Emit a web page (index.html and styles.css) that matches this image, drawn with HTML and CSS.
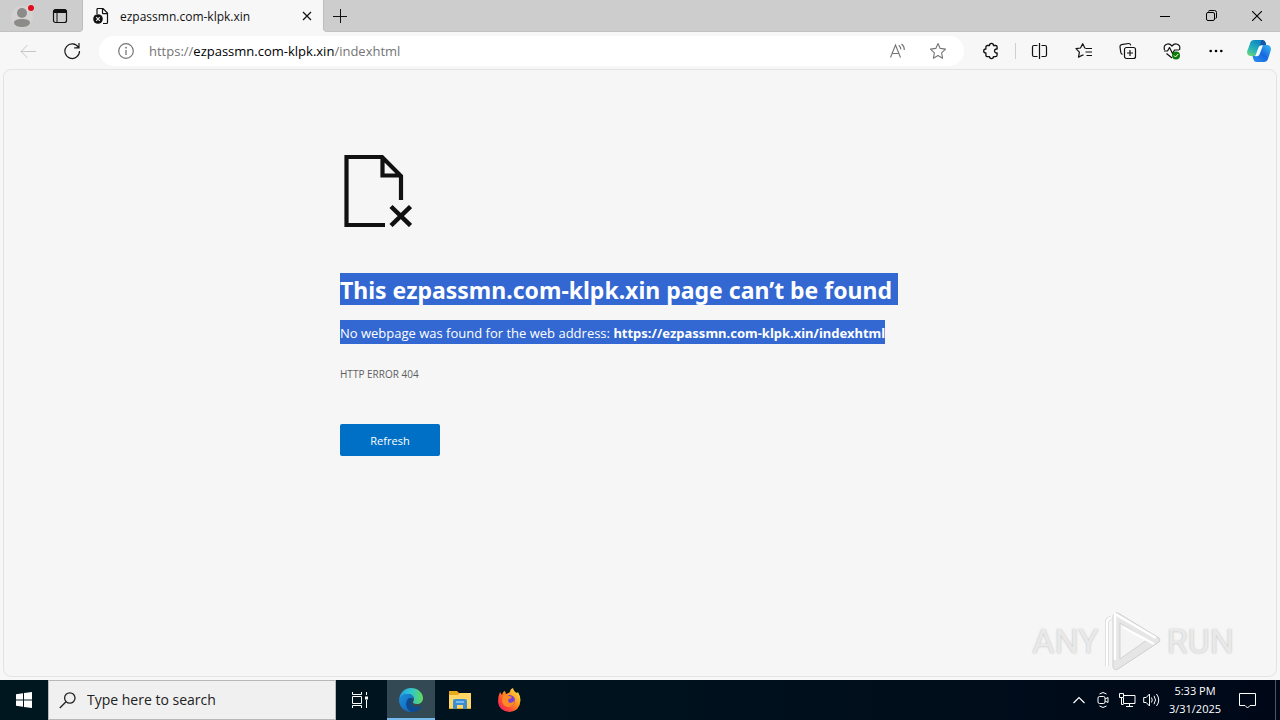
FILE: index.html
```html
<!DOCTYPE html>
<html lang="en">
<head>
<meta charset="utf-8">
<title>ezpassmn.com-klpk.xin</title>
<link rel="stylesheet" href="styles.css">
</head>
<body>
<div class="desktop">
  <header class="titlebar">
    <div class="profile-area">
      <button class="icon-btn profile" aria-label="Profile">
        <svg width="24" height="26" viewBox="0 0 24 26"><circle cx="12" cy="14" r="11" fill="#d5d3d1"/><circle cx="12" cy="10" r="5" fill="#8d8b89"/><path d="M4 20c0-3 3-4 8-4s8 1 8 4c-1 3-4 4-8 4s-7-1-8-4z" fill="#8d8b89"/><circle cx="21" cy="5" r="4" fill="#d8d6d5"/><circle cx="21" cy="5" r="3" fill="#e00b1c"/></svg>
      </button>
      <button class="icon-btn tab-actions" aria-label="Tab actions">
        <svg width="16" height="16" viewBox="0 0 16 16"><rect x="1.5" y="1.5" width="13" height="13" rx="2" fill="none" stroke="#111" stroke-width="1.2"/><path d="M1.500 5V3.500q0-2 2-2h9q2 0 2 2V5z" fill="#111"/><path d="M5 5v9" stroke="#111"/></svg>
      </button>
    </div>
    <div class="tab">
      <svg class="tab-icon" width="16" height="18" viewBox="0 0 16 18"><path d="M4 7V2.500q0-1 1-1h5l4.500 4.500v9.500q0 1-1 1H10M9.500 1.500V6q0 .7.7.7h4.300" fill="none" stroke="#111" stroke-width="1.2"/><circle cx="5" cy="12" r="4.800" fill="#111"/><path d="M3.200 10.200l3.600 3.600M6.800 10.200l-3.600 3.600" stroke="#eee" stroke-width="1.100"/></svg>
      <span class="tab-title">ezpassmn.com-klpk.xin</span>
      <button class="icon-btn tab-close" aria-label="Close tab"><svg width="10" height="10" viewBox="0 0 10 10"><path d="M1 1l8 8M9 1L1 9" stroke="#111" stroke-width="1.200"/></svg></button>
    </div>
    <button class="icon-btn new-tab" aria-label="New tab"><svg width="14" height="14" viewBox="0 0 14 14"><path d="M7.500 0v14M0 7.500h14" stroke="#111"/></svg></button>
    <div class="window-controls">
      <button class="icon-btn" aria-label="Minimize"><svg width="10" height="10" viewBox="0 0 10 10"><path d="M0 5.500h10" stroke="#000"/></svg></button>
      <button class="icon-btn" aria-label="Restore"><svg width="11" height="11" viewBox="0 0 11 11"><rect x=".5" y="2.500" width="8" height="8" rx="1.500" fill="none" stroke="#000"/><path d="M2.500 1.500q0-1 1.500-1h4.500q2 0 2 2V7q0 1.500-1 1.500" fill="none" stroke="#000"/></svg></button>
      <button class="icon-btn" aria-label="Close"><svg width="10" height="10" viewBox="0 0 10 10"><path d="M0 0l10 10M10 0L0 10" stroke="#000" stroke-width="1.100"/></svg></button>
    </div>
  </header>

  <nav class="toolbar" aria-label="Browser toolbar">
    <button class="icon-btn tool" aria-label="Back"><svg width="16" height="14" viewBox="0 0 16 14"><path d="M16 7.500H1M7.500 1L1 7.500 7.500 14" fill="none" stroke="#c6c6c6"/></svg></button>
    <button class="icon-btn tool" aria-label="Refresh page"><svg width="18" height="18" viewBox="0 0 18 18"><path d="M15.500 5.500A7.300 7.300 0 1 0 16.500 9M16 1v4.800h-4.800" fill="none" stroke="#1b1b1b" stroke-width="1.200"/></svg></button>
    <div class="omnibox">
      <button class="icon-btn site-info" aria-label="Site information"><svg width="16" height="16" viewBox="0 0 16 16"><circle cx="8" cy="8" r="7.300" fill="none" stroke="#757575" stroke-width="1.200"/><path d="M8 7v5" stroke="#757575" stroke-width="1.300"/><circle cx="8" cy="4.700" r=".9" fill="#757575"/></svg></button>
      <div class="url" role="textbox" aria-label="Address" contenteditable="true" spellcheck="false">https://<span class="host">ezpassmn.com-klpk.xin</span>/indexhtml</div>
      <button class="icon-btn omni-btn" aria-label="Read aloud"><svg width="18" height="16" viewBox="0 0 18 16"><path d="M1.500 14.500L6.500 2l5 12.500M3.300 10.500h6.400M9.800 2.200q2 1.600 2 4.300M12.500 1q3 2.300 2.800 6" fill="none" stroke="#757575" stroke-width="1.100"/></svg></button>
      <button class="icon-btn omni-btn" aria-label="Add to favorites"><svg width="18" height="18" viewBox="0 0 18 18"><path d="M9 1.500l2.200 4.900 5.300.7-3.900 3.700 1 5.400L9 13.600l-4.600 2.600 1-5.400L1.500 7.100l5.300-.7z" fill="none" stroke="#757575" stroke-width="1.100" stroke-linejoin="round"/></svg></button>
    </div>
    <button class="icon-btn tool" aria-label="Extensions"><svg width="18" height="18" viewBox="0 0 18 18"><path d="M5.500 3.500h2q0-2.200 2-2.200t2 2.200h2q1.600 0 1.600 1.600V7h-.8q-1.800.2-1.800 2t1.800 2h.8v2q0 1.600-1.600 1.600h-2q0 2-2 2t-2-2h-2q-1.600 0-1.600-1.600v-2q-2.200 0-2.200-2t2.200-2V5.100q0-1.600 1.600-1.600z" fill="none" stroke="#111" stroke-width="1.300" stroke-linejoin="round"/></svg></button>
    <span class="divider"></span>
    <button class="icon-btn tool" aria-label="Split screen"><svg width="18" height="18" viewBox="0 0 18 18"><path d="M6.500 3.500H3q-1.500 0-1.500 1.500v8q0 1.500 1.500 1.500h3.500M10.500 3.500H14q1.500 0 1.500 1.500v8q0 1.500-1.500 1.500h-3.500M8.500 1v16" fill="none" stroke="#111" stroke-width="1.200"/></svg></button>
    <button class="icon-btn tool" aria-label="Favorites"><svg width="18" height="18" viewBox="0 0 18 18"><path d="M10.500 6H9.800L7.700 1.700 5.500 6l-4.500.7 3.400 3.400-.9 5L7.700 13l.8.4M10.500 6.500H17M10.500 10H17M11.500 13.500H17" fill="none" stroke="#111" stroke-width="1.200" stroke-linejoin="round"/></svg></button>
    <button class="icon-btn tool" aria-label="Collections"><svg width="18" height="18" viewBox="0 0 18 18"><rect x="5.500" y="5.500" width="11" height="11" rx="2" fill="none" stroke="#111" stroke-width="1.200"/><path d="M11 8v6M8 11h6M3.500 12.500Q2 12 1.700 10L1 5q-.2-2 1.500-2.300l6.800-1.200q2-.2 2.400 1.800" fill="none" stroke="#111" stroke-width="1.200"/></svg></button>
    <button class="icon-btn tool" aria-label="Browser essentials"><svg width="18" height="18" viewBox="0 0 18 18"><path d="M1.500 8Q0 3 4.500 2 7 1.700 9 4q2-2.300 4.500-2Q18 3 16.500 8M3.500 11.500L9 16M1 9h3.500l2-3.500 3 6L11.500 8H16" fill="none" stroke="#111" stroke-width="1.200" stroke-linejoin="round"/><circle cx="13" cy="13.500" r="4" fill="#0b7a0b"/><path d="M11 13.500l1.500 1.500 2.700-3" fill="none" stroke="#fff"/></svg></button>
    <button class="icon-btn tool" aria-label="Settings and more"><svg width="14" height="4" viewBox="0 0 14 4"><circle cx="1.700" cy="2" r="1.300"/><circle cx="7" cy="2" r="1.300"/><circle cx="12.300" cy="2" r="1.300"/></svg></button>
    <button class="icon-btn tool copilot" aria-label="Copilot">
      <svg width="24" height="24" viewBox="0 0 24 24"><defs><linearGradient id="cpA" x1="0" y1="1" x2=".7" y2="0"><stop offset="0" stop-color="#7cdc68"/><stop offset=".4" stop-color="#2bb5b8"/><stop offset="1" stop-color="#087fc4"/></linearGradient><linearGradient id="cpB" x1="0" y1="1" x2="1" y2="0"><stop offset="0" stop-color="#2d91f0"/><stop offset=".5" stop-color="#1769df"/><stop offset="1" stop-color="#38bdf2"/></linearGradient></defs>
      <path d="M7 1h8.500q2.300 0 3 2.500L19.200 6H15q-2 0-2.700 2.200L10 15q-.8 2-2.700 2H4Q0 17 0 12.800 2 7.500 3.500 3 4.500 1 7 1z" fill="url(#cpA)"/><path d="M14.500 1h1q2.300 0 3 2.500L19.200 6H15q-2 0-2.700 2.200z" fill="#1556a8"/><path d="M17 23H9.500q-2.300 0-3-2.500L5.500 17h2.800q1.900 0 2.500-2l2.500-7q.7-2 2.600-2H20q4 0 4 4.500-1.500 5.500-3.500 10.500-1 2-3.500 2z" fill="url(#cpB)"/><path d="M11.500 8.500q.7-2 2.600-2h1.800L12.500 15.500q-.7 1.700-2.500 1.700H8.200z" fill="#f4faff"/></svg>
    </button>
  </nav>

  <main class="viewport">
    <section class="error-page">
      <svg class="error-icon" width="72" height="72" viewBox="0 0 72 72"><path d="M45 70H6.500V2H42L61 21V45M42.500 2v18.500H61" fill="none" stroke="#111" stroke-width="4.200"/><path d="M51 51.500l19.500 19M70.500 51.500L51 70.500" stroke="#111" stroke-width="4.500"/></svg>
      <h1><span class="selected selected-line">This ezpassmn.com-klpk.xin page can’t be found</span></h1>
      <p class="message"><span class="selected">No webpage was found for the web address: <strong>https://ezpassmn.com-klpk.xin/indexhtml</strong></span></p>
      <p class="error-code">HTTP ERROR 404</p>
      <button class="refresh">Refresh</button>
    </section>
    <div class="watermark">
      <span>ANY</span>
      <svg width="60" height="64" viewBox="0 0 60 64"><path d="M15 4l41 25q2 2 0 4L15 60q-4 2-5-2V7q1-4 5-3z" fill="#e6e6e6" stroke="#cfcfcf"/><path d="M17 14v36l27-19z" fill="#f4f4f4" stroke="#d1d1d1"/><path d="M4 57V13q0-3 4-4" fill="none" stroke="#d6d6d6" stroke-width="4"/><path d="M4 57V13q0-3 4-4M12 51V5L53 29M20 18l31 17" fill="none" stroke="#fff" stroke-width="2.500"/></svg>
      <span>RUN</span>
    </div>
  </main>

  <footer class="taskbar">
    <button class="icon-btn start" aria-label="Start"><svg width="16" height="16" viewBox="0 0 16 16"><path d="M0 2.300L7 1.300V7.500H0zM8 1.100L16 0v7.500H8zM0 8.500h7v6.200l-7-1zM8 8.500h8V16l-8-1.100z" fill="#fff"/></svg></button>
    <div class="search">
      <svg width="17" height="17" viewBox="0 0 17 17"><circle cx="10.800" cy="6" r="5.200" fill="none" stroke="#222" stroke-width="1.300"/><path d="M7 9.800L.8 16" stroke="#222" stroke-width="1.300"/></svg>
      <input type="text" class="search-input" placeholder="Type here to search" aria-label="Type here to search">
    </div>
    <div class="apps">
      <button class="icon-btn app task-view" aria-label="Task view"><svg width="18" height="16" viewBox="0 0 18 16"><path d="M1.500 0v2.500h9V0M1.500 16v-2.500h9V16M1.500 4.500h9v7h-9zM15.500 0v3M15.500 8v8" fill="none" stroke="#fff"/><path d="M14 4.500h3v3h-3z" fill="#fff"/></svg></button>
      <button class="icon-btn app active" aria-label="Microsoft Edge">
        <svg width="24" height="24" viewBox="0 0 24 24"><defs><linearGradient id="edTop" x1="0" y1=".5" x2="1" y2=".5"><stop offset="0" stop-color="#249fe3"/><stop offset=".5" stop-color="#2fc5d1"/><stop offset="1" stop-color="#65d957"/></linearGradient><linearGradient id="edLow" x1="0" y1="0" x2="1" y2="1"><stop offset="0" stop-color="#1a91dd"/><stop offset="1" stop-color="#1460b4"/></linearGradient></defs><path d="M0 12C1 4 6 0 12 0c7 0 12 5 12 10 0 4-3 6-6 6-3 0-4-1-4-2s1-1 1-3c0-3-3-5-6-5-5 0-8 3-9 6z" fill="url(#edTop)"/><path d="M0 12c1-4 4-6 8-6 4 0 7 2 7 5-1-1-2-1-3-1-3 0-4 2-4 5 0 5 4 9 7 9h-3C5 24 0 18 0 12z" fill="url(#edLow)"/><path d="M11 10c-6 2-5 12 2 14 4 0 8-2 10-6-5 2-11 1-11-4 0-2 1-3 2-3-1-1-2-1-3-1z" fill="#0d4b91"/></svg>
      </button>
      <button class="icon-btn app" aria-label="File Explorer"><svg width="22" height="20" viewBox="0 0 22 20"><path d="M0 1h8l2 2h12v16H0z" fill="#e9a91c"/><path d="M0 5h9l2-2h11v15H0z" fill="#ffd766"/><path d="M4 11q0-2 2-2h10q2 0 2 2v8h-4v-4H8v4H4z" fill="#3c8ed0"/><path d="M7 12h8" stroke="#75baf0" stroke-width="2"/></svg></button>
      <button class="icon-btn app" aria-label="Firefox">
        <svg width="24" height="24" viewBox="0 0 24 24"><defs><linearGradient id="fx" x1="1" y1="0" x2="0" y2="1"><stop offset="0" stop-color="#fff44f"/><stop offset=".4" stop-color="#ff9821"/><stop offset=".7" stop-color="#ff4538"/><stop offset="1" stop-color="#e31678"/></linearGradient></defs><path d="M3 4l2 3q1-4 3-4l1 3q3-1 4-2 0-3 3-4 1 4 4 5l1-1q2 3 2.500 8Q23 23 12.500 24 2 23 1 14 1 8 3 4z" fill="url(#fx)"/><circle cx="12.500" cy="12.500" r="5.500" fill="#7542d8"/><path d="M6 8q4-2 6 0l3 1q-1 2-3.500 2-1 3 1.500 4 3 0 5-3-1 7-7 7-6-1-6-7z" fill="#ff8a24"/></svg>
      </button>
    </div>
    <div class="tray">
      <button class="icon-btn tray-btn" aria-label="Show hidden icons"><svg width="12" height="8" viewBox="0 0 12 8"><path d="M.5 7L6 1.500 11.500 7" fill="none" stroke="#fff" stroke-width="1.200"/></svg></button>
      <button class="icon-btn tray-btn" aria-label="Meet now"><svg width="12" height="16" viewBox="0 0 12 16"><rect x="1" y="4.500" width="7" height="7" rx="1.500" fill="none" stroke="#fff"/><path d="M8 7l3-1.500v5L8 9M2.500 2Q6-1 9.500 2M2.500 14q3.500 3 7 0" fill="none" stroke="#fff"/></svg></button>
      <button class="icon-btn tray-btn" aria-label="Network"><svg width="17" height="16" viewBox="0 0 17 16"><path d="M5 3.500h11v8H4.500V6M10.500 12v2.500M7 14.500h7M.5 1.500h4v4h-4zM2.500 5.500v7h2" fill="none" stroke="#fff"/></svg></button>
      <button class="icon-btn tray-btn" aria-label="Volume"><svg width="17" height="16" viewBox="0 0 17 16"><path d="M.7 5.500h2.500L6.500 2v12L3.200 10.500H.7zM8.500 5.500q1.500 2.500 0 5M11 3.800q3 4.200 0 8.400M13.500 2q4.500 6 0 12" fill="none" stroke="#fff"/></svg></button>
      <button class="clock"><span>5:33 PM</span><span>3/31/2025</span></button>
      <button class="icon-btn notifications" aria-label="Notifications"><svg width="17" height="17" viewBox="0 0 17 17"><path d="M.5 1.500h16v12H11l-2.500 2.500L6 13.500H.5z" fill="none" stroke="#fff"/></svg></button>
      <button class="icon-btn show-desktop" aria-label="Show desktop"></button>
    </div>
  </footer>
</div>
</body>
</html>
```
FILE: styles.css
```css
* { box-sizing: border-box; }

body {
  margin: 0;
  font-family: "Open Sans", "Noto Sans", sans-serif;
  color: #111;
  background: #f7f7f7;
}

button { font: inherit; }
svg { display: block; flex: none; }

.desktop {
  display: flex;
  flex-direction: column;
  min-height: 100vh;
}

.icon-btn {
  display: flex;
  align-items: center;
  justify-content: center;
  flex: none;
  padding: 0;
  border: 0;
  background: none;
}

/* Tab strip */
.titlebar {
  display: flex;
  height: 32px;
  background: #f7f7f7;
}

.profile-area {
  display: flex;
  width: 83px;
  padding-left: 9px;
  background: #cdcdcd;
  border-bottom-right-radius: 4px;
  border-right: 1px solid #bdbdbd;
  border-bottom: 1px solid #c2c2c2;
}

.profile { width: 26px; }
.tab-actions { width: 50px; }

.tab {
  display: flex;
  align-items: center;
  width: 240px;
  padding: 0 6px 0 10px;
}

.tab-title {
  flex: 1;
  padding-left: 11px;
  font-size: 12px;
  white-space: nowrap;
}

.tab-close { width: 20px; height: 20px; }

.new-tab {
  width: 33px;
  background: #cdcdcd;
  border-bottom-left-radius: 4px;
  border-bottom: 1px solid #c2c2c2;
  border-left: 1px solid #bdbdbd;
}

.window-controls {
  display: flex;
  flex: 1;
  justify-content: flex-end;
  background: #cdcdcd;
  border-bottom: 1px solid #c2c2c2;
}

.window-controls .icon-btn { width: 46px; }

/* Address bar row */
.toolbar {
  display: flex;
  align-items: center;
  height: 37px;
  padding-left: 6px;
}

.tool { width: 44px; height: 32px; }
.copilot { width: 42px; }

.omnibox {
  display: flex;
  align-items: center;
  flex: 1;
  height: 30px;
  margin: 0 5px;
  padding: 0 6px 0 14px;
  border-radius: 15px;
  background: #fff;
}

.site-info { width: 26px; }
.omni-btn { width: 40px; }

.url {
  flex: 1;
  padding-left: 10px;
  font-size: 13px;
  line-height: 20px;
  color: #757575;
  white-space: nowrap;
  outline: none;
}

.host { color: #000; }

.divider {
  width: 1px;
  height: 16px;
  margin: 0 2px;
  background: #cfcfcf;
}

/* Page */
.viewport {
  display: flex;
  flex-direction: column;
  justify-content: space-between;
  flex: 1;
  margin: 0 3px 3px;
  border: 1px solid #e3e3e3;
  border-radius: 8px;
  background: #f6f6f6;
}

.error-page {
  width: 600px;
  max-width: 100%;
  margin: 0 auto;
  padding-top: 85px;
}

h1 {
  margin: 46px 0 0;
  font-family: "Noto Sans", "Open Sans", sans-serif;
  font-size: 23px;
  line-height: 30px;
  white-space: nowrap;
}

.selected {
  display: block;
  width: fit-content;
  padding-top: 2px;
  color: #fff;
  background: #3367d1;
}

.selected-line { padding-right: 6px; }

.message {
  margin: 15px 0 0;
  font-size: 13px;
  line-height: 22px;
  white-space: nowrap;
}

.message strong { font-family: "Noto Sans", "Open Sans", sans-serif; }

.error-code {
  margin: 22px 0 0;
  font-size: 10px;
  line-height: 16px;
  color: #5f5f5f;
}

.refresh {
  width: 100px;
  height: 32px;
  margin-top: 42px;
  padding: 0;
  border: 0;
  border-radius: 2px;
  font-size: 11px;
  color: #fff;
  background: #0070c6;
}

.watermark {
  display: flex;
  align-items: center;
  align-self: flex-end;
  gap: 4px;
  margin: 0 42px 3px 0;
  font-family: Roboto, "Liberation Sans", sans-serif;
  font-size: 34px;
  line-height: 64px;
  color: #e9e9e9;
  text-shadow: 0 0 2px #b4b4b4, 0 -1px 0 #fff;
}

/* Taskbar */
.taskbar {
  display: flex;
  height: 40px;
  color: #fff;
  background: linear-gradient(to right, #001720, #00121e 50%, #000818);
}

.start { width: 48px; }

.search {
  display: flex;
  align-items: center;
  width: 288px;
  padding: 0 12px 0 10px;
  border: 1px solid #b8b8b8;
  background: #f0f0f0;
}

.search-input {
  flex: 1;
  min-width: 0;
  padding: 0 0 0 11px;
  border: 0;
  outline: 0;
  font: 14px/20px "Open Sans", "Noto Sans", sans-serif;
  background: none;
}

.search-input::placeholder { color: #222; opacity: 1; }

.apps {
  display: flex;
  gap: 1px;
}

.app { width: 48px; }
.task-view { margin-right: 2px; }

.active {
  background: #334953;
  box-shadow: inset 0 -2px #76b9ed;
}

.tray {
  display: flex;
  align-items: stretch;
  margin-left: auto;
}

.tray-btn { width: 24px; }

.clock {
  display: flex;
  flex-direction: column;
  align-items: center;
  width: 64px;
  padding: 2px 0;
  border: 0;
  font-size: 11px;
  line-height: 18px;
  color: #fff;
  background: none;
}

.notifications { width: 40px; margin-right: 8px; }

.show-desktop {
  width: 5px;
  border-left: 1px solid #4d5560;
}
```
